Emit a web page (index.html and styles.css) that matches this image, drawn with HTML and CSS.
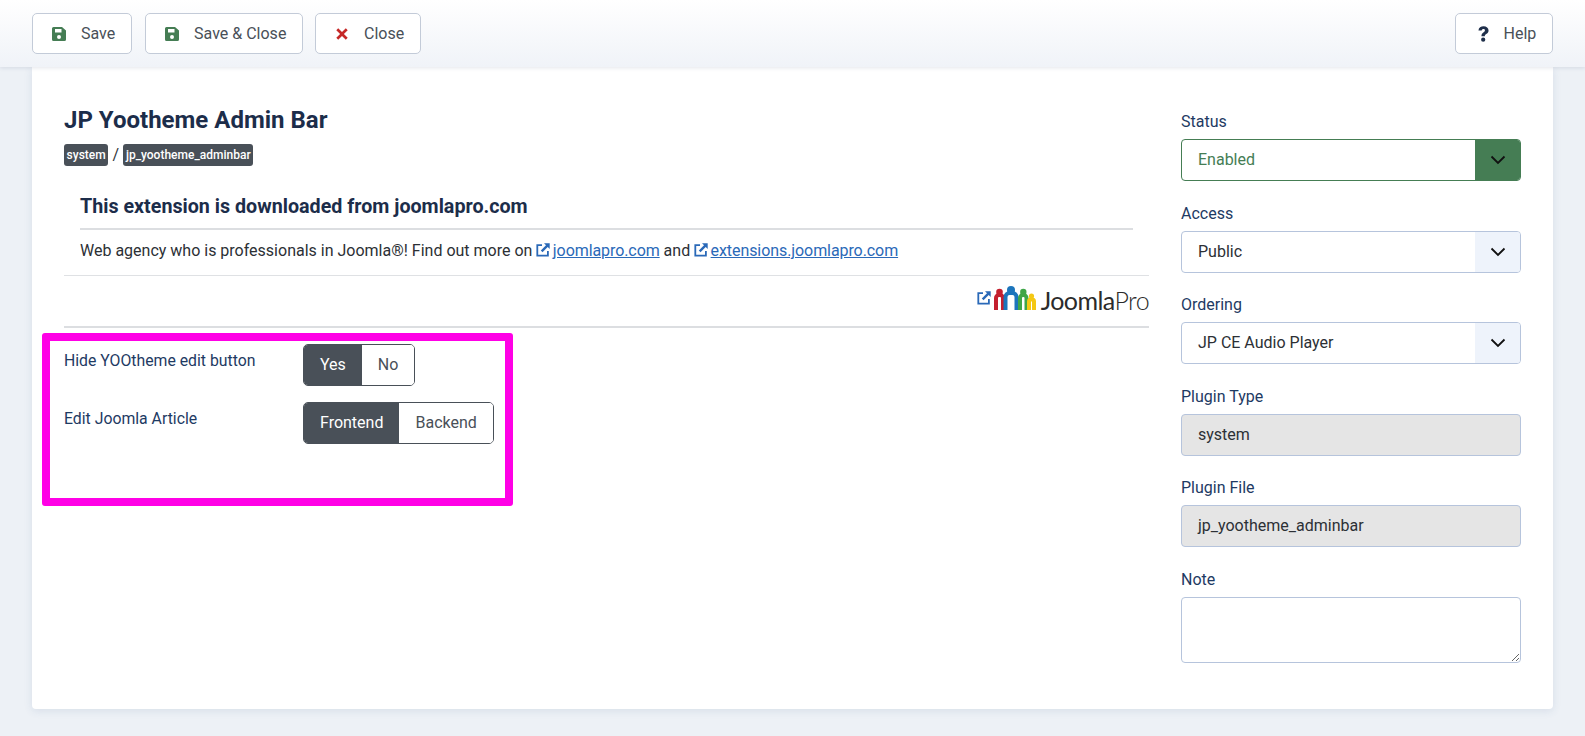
FILE: index.html
```html
<!DOCTYPE html>
<html lang="en">
<head>
<meta charset="utf-8">
<title>JP Yootheme Admin Bar</title>
<link rel="stylesheet" href="styles.css">
</head>
<body>
<header class="toolbar">
  <button class="tbtn"><svg class="ico" viewBox="0 0 14 14"><path class="green" fill-rule="evenodd" d="M1.5 0H10l4 3.6v8.9A1.5 1.5 0 0 1 12.500 14h-11A1.500 1.500 0 0 1 0 12.500v-11A1.500 1.500 0 0 1 1.500 0zM3 2v3.500h6.500V2zM7 8a2 2 0 1 0 0 4 2 2 0 0 0 0-4z"/></svg><span>Save</span></button>
  <button class="tbtn"><svg class="ico" viewBox="0 0 14 14"><path class="green" fill-rule="evenodd" d="M1.5 0H10l4 3.6v8.9A1.5 1.5 0 0 1 12.500 14h-11A1.500 1.500 0 0 1 0 12.500v-11A1.500 1.500 0 0 1 1.500 0zM3 2v3.500h6.500V2zM7 8a2 2 0 1 0 0 4 2 2 0 0 0 0-4z"/></svg><span>Save &amp; Close</span></button>
  <button class="tbtn"><svg class="ico" viewBox="0 0 14 14"><path class="red" d="M3.200 1.300 7 5.100l3.800-3.800 1.900 1.900L8.900 7l3.800 3.800-1.900 1.900L7 8.900l-3.800 3.800-1.900-1.900L5.100 7 1.300 3.200z"/></svg><span>Close</span></button>
  <button class="tbtn help"><svg class="ico-q" viewBox="2.800 .6 8.500 12.800"><path class="navy" d="M3 4.200C3.200 1.900 5 .8 7.100.8c2.300 0 4 1.300 4 3.300 0 1.500-.9 2.200-1.900 2.900-.8.500-1.100.9-1.100 1.700H5.400c0-1.600.5-2.300 1.500-3 .8-.5 1.300-.9 1.300-1.600 0-.7-.5-1.100-1.200-1.100-.8 0-1.300.5-1.400 1.200zM6.800 9.800a1.700 1.700 0 1 1 0 3.400 1.700 1.700 0 0 1 0-3.400z"/></svg><span>Help</span></button>
</header>

<main class="card">
  <section class="main-col">
    <h1 class="title">JP Yootheme Admin Bar</h1>
    <p class="crumbs"><span class="badge">system</span><span class="sep">/</span><span class="badge">jp_yootheme_adminbar</span></p>
    <div class="desc">
      <h2 class="desc-title">This extension is downloaded from joomlapro.com</h2>
      <p class="desc-text">Web agency who is professionals in Joomla®! Find out more on <a href="#"><svg class="ext" viewBox="0 0 14 14"><path d="M11 8v3.800H2.200V3H6V1.200H.4v12.400h12.400V8z"/><path d="M8 .3h5.700V6l-2-2-5.200 5.200L4.800 7.500 10 2.300z"/></svg> <u>joomlapro.com</u></a> and <a href="#"><svg class="ext" viewBox="0 0 14 14"><path d="M11 8v3.800H2.200V3H6V1.200H.4v12.400h12.400V8z"/><path d="M8 .3h5.700V6l-2-2-5.200 5.200L4.800 7.500 10 2.300z"/></svg> <u>extensions.joomlapro.com</u></a></p>
    </div>
    <div class="logo-row">
      <svg class="ext logo-ext" viewBox="0 0 14 14"><path d="M11 8v3.800H2.200V3H6V1.200H.4v12.400h12.400V8z"/><path d="M8 .3h5.700V6l-2-2-5.200 5.200L4.800 7.500 10 2.300z"/></svg>
      <svg class="people" viewBox="0 0 42 24">
        <g fill="none" stroke-width="4">
          <path stroke="#c4202f" d="M2 24V12a3 3 0 0 1 3-3h1a3 3 0 0 1 3 3V24"/>
          <path stroke="#1c75bc" d="M11.500 24V11a4 4 0 0 1 4-4h3a4 4 0 0 1 4 4V24"/>
          <path stroke="#3fa648" d="M26 24V12a3 3 0 0 1 3-3h.500a3 3 0 0 1 3 3V24"/>
          <path stroke="#f4c814" d="M35 24V15.500a2 2 0 0 1 2-2h1a2 2 0 0 1 2 2V24"/>
        </g>
        <circle cx="5.500" cy="6" r="3.300" fill="#c4202f"/>
        <circle cx="17" cy="4" r="4" fill="#1c75bc"/>
        <circle cx="29.300" cy="6" r="3.200" fill="#3fa648"/>
        <circle cx="37.500" cy="10" r="2.600" fill="#f4c814"/>
      </svg>
      <span class="logo-text">Joomla<span class="logo-light">Pro</span></span>
    </div>
    <div class="fields">
      <div class="field">
        <span class="field-label">Hide YOOtheme edit button</span>
        <div class="switch"><span class="opt on">Yes</span><span class="opt">No</span></div>
      </div>
      <div class="field">
        <span class="field-label">Edit Joomla Article</span>
        <div class="switch"><span class="opt on">Frontend</span><span class="opt">Backend</span></div>
      </div>
    </div>
    <div class="highlight"></div>
  </section>

  <aside class="side">
    <div class="group">
      <label class="lbl">Status</label>
      <div class="sel enabled"><span class="sel-val">Enabled</span><span class="sel-arrow"><svg class="chev" viewBox="0 0 16 10"><path d="M1.500 1.500 8 8l6.500-6.500"/></svg></span></div>
    </div>
    <div class="group">
      <label class="lbl">Access</label>
      <div class="sel"><span class="sel-val">Public</span><span class="sel-arrow"><svg class="chev" viewBox="0 0 16 10"><path d="M1.500 1.500 8 8l6.500-6.500"/></svg></span></div>
    </div>
    <div class="group">
      <label class="lbl">Ordering</label>
      <div class="sel"><span class="sel-val">JP CE Audio Player</span><span class="sel-arrow"><svg class="chev" viewBox="0 0 16 10"><path d="M1.500 1.500 8 8l6.500-6.500"/></svg></span></div>
    </div>
    <div class="group">
      <label class="lbl">Plugin Type</label>
      <div class="ro">system</div>
    </div>
    <div class="group">
      <label class="lbl">Plugin File</label>
      <div class="ro">jp_yootheme_adminbar</div>
    </div>
    <div class="group">
      <label class="lbl">Note</label>
      <textarea class="note"></textarea>
    </div>
  </aside>
</main>
</body>
</html>
```
FILE: styles.css
```css
* { box-sizing: border-box; }
html, body { height: 100%; }
body {
  margin: 0;
  background: #edf1f6;
  font-family: Roboto, "Liberation Sans", sans-serif;
  font-size: 16px;
  line-height: 24px;
  color: #2c3035;
  overflow: hidden;
}
.toolbar {
  position: relative;
  z-index: 2;
  height: 67px;
  display: flex;
  align-items: center;
  gap: 12.600px;
  padding: 0 32.300px;
  background: linear-gradient(180deg, #ffffff 0%, #f0f3f8 100%);
  box-shadow: 0 1px 4px rgba(30, 50, 90, .12);
}
.tbtn {
  height: 41px;
  display: inline-flex;
  align-items: center;
  gap: 15px;
  padding: 0 15.400px 0 18.700px;
  border: 1px solid #c3cbd8;
  border-radius: 5px;
  background: #fff;
  font: inherit;
  color: #495058;
}
.tbtn:first-child { margin-right: .6px; padding-right: 16px; }
.help { margin-left: auto; padding-left: 19.700px; }
.ico { width: 14px; height: 14px; }
.ico-q { width: 11px; height: 16px; margin-left: 2px; }
.green { fill: #457d54; }
.red { fill: #c52827; }
.navy { fill: #1f2f4a; }
.card {
  width: 1521px;
  height: 642px;
  margin-left: 32px;
  display: flex;
  background: #fff;
  border-radius: 0 0 4px 4px;
  box-shadow: 0 2px 8px rgba(60, 90, 140, .12);
  padding: 32px;
  gap: 32px;
}
.main-col { position: relative; width: 1085px; flex: none; }
.title {
  margin: 5px 0 0;
  font-size: 24px;
  line-height: 32px;
  font-weight: 700;
  color: #1c2d4a;
}
.crumbs { margin: 8px 0 0; display: flex; align-items: center; height: 22px; }
.badge {
  background: #495058;
  color: #fff;
  border-radius: 3px;
  font-size: 12px;
  font-weight: 500;
  line-height: 22px;
  padding: 0 2.600px;
}
.sep { width: 15px; text-align: center; color: #30353a; }
.desc { padding: 0 16px; margin-top: 20px; border-bottom: 1px solid #dfe1e4; height: 90px; }
.desc-title {
  margin: 0;
  height: 44px;
  padding-top: 8px;
  font-size: 19.700px;
  line-height: 25px;
  font-weight: 700;
  color: #1c2d4a;
  border-bottom: 2px solid #dcdee1;
}
.desc-text { margin: 9px 0 0; }
a { color: #2a69b8; text-decoration: none; }
a u { letter-spacing: -.08px; }
.ext { width: 14px; height: 14px; fill: #2a69b8; vertical-align: -1px; margin-right: -1.500px; }
.logo-row {
  height: 52px;
  display: flex;
  align-items: center;
  justify-content: flex-end;
  border-bottom: 2px solid #dcdee1;
  padding-top: 2px;
}
.logo-ext { margin: 0 3px 8px 0; }
.people { width: 42px; height: 24px; margin-right: 5px; margin-bottom: 9px; }
.logo-text {
  font-family: Lato, sans-serif;
  font-size: 25px;
  line-height: 30px;
  color: #2b2b2b;
  letter-spacing: -.6px;
  margin-bottom: 4px;
}
.logo-light { font-weight: 300; }
.fields { padding-top: 16px; display: flex; flex-direction: column; gap: 16px; }
.field { display: flex; align-items: flex-start; }
.field-label { width: 239px; color: #1e3a63; margin-top: 5px; font-size: 15.800px; }
.switch {
  display: flex;
  height: 42px;
  border: 1px solid #495058;
  border-radius: 5px;
  overflow: hidden;
}
.opt { padding: 0 16px; line-height: 40px; color: #495058; background: #fff; }
.opt.on { background: #495058; color: #fff; }
.highlight {
  position: absolute;
  left: -22px;
  top: 234px;
  width: 471px;
  height: 173px;
  border: 8px solid #ff00e6;
  border-radius: 3px;
  pointer-events: none;
}
.side { width: 340px; flex: none; margin-top: 9px; display: flex; flex-direction: column; }
.group { margin-bottom: 18.600px; }
.lbl { display: block; height: 31px; line-height: 27px; color: #1e3a63; }
.sel {
  height: 42px;
  display: flex;
  border: 1px solid #b6c4dc;
  border-radius: 4px;
  overflow: hidden;
  color: #2c3035;
}
.sel-val { flex: 1; padding-left: 16px; line-height: 40px; }
.sel-arrow {
  width: 45px;
  display: flex;
  align-items: center;
  justify-content: center;
  background: #eef3fb;
}
.chev { width: 16px; height: 10px; fill: none; stroke: #111; stroke-width: 1.800; }
.enabled { border-color: #457d54; color: #457d54; }
.enabled .sel-arrow { background: #457d54; }
.ro {
  height: 42px;
  border: 1px solid #b6c4dc;
  border-radius: 4px;
  background: #e5e5e5;
  padding-left: 16px;
  line-height: 40px;
  color: #2c3035;
}
.note {
  display: block;
  width: 340px;
  height: 66px;
  border: 1px solid #b6c4dc;
  border-radius: 4px;
  background: #fff;
  margin: 0;
  padding: 0;
}
```
